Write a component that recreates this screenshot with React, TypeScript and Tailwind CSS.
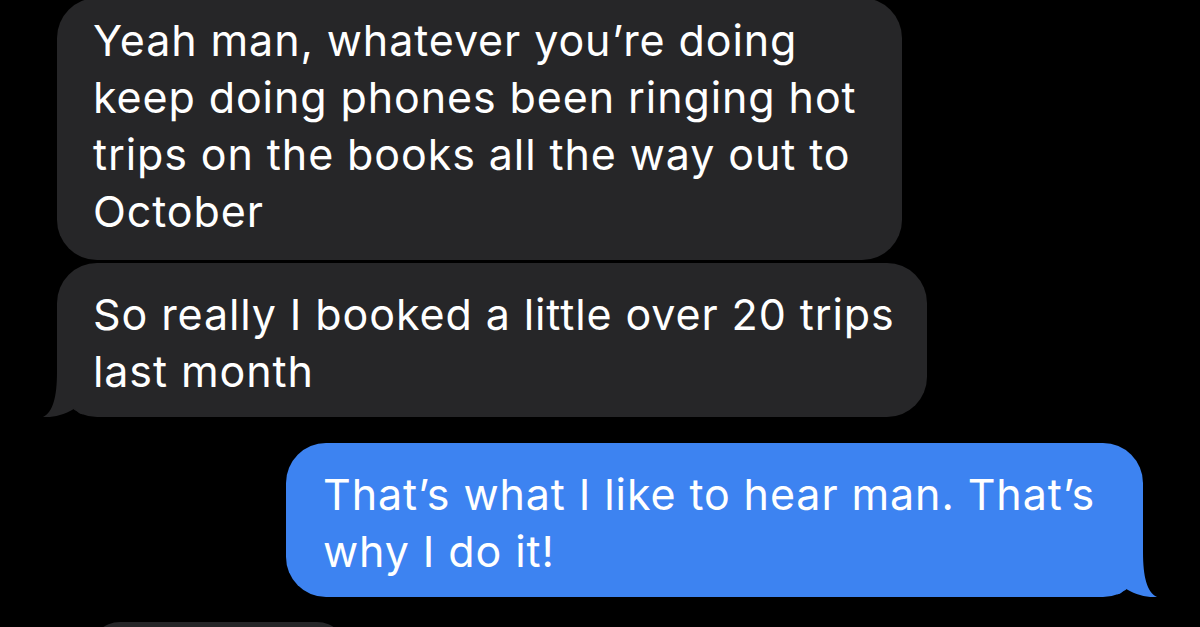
const GRAY = "bg-[#262628]";

const GrayTail = () => (
  <svg className="absolute left-[-14px] bottom-0" width="40" height="45" viewBox="0 0 40 45">
    <path d="M40 0 L14 0 C14 25 10 40 0 45 C10 46 24 42 32 36 C34 40 38 43 40 42 Z" fill="#262628" />
  </svg>
);

const BlueTail = () => (
  <svg className="absolute right-[-14px] bottom-0" width="40" height="45" viewBox="0 0 40 45">
    <path d="M0 0 L26 0 C26 25 30 40 40 45 C30 46 16 42 8 36 C6 40 2 43 0 42 Z" fill="#3d83f1" />
  </svg>
);

export default function App() {
  return (
    <div className="w-[1200px] h-[627px] bg-black overflow-hidden font-['Inter','Noto_Sans',sans-serif] text-white text-[43px] leading-[57px] tracking-[0.9px]">
      <div className="flex flex-col">
        <div className={`ml-[57px] mt-[-2px] w-[845px] ${GRAY} rounded-[40px] pl-[36px] pt-[14px] pb-[20px]`}>
          Yeah man, whatever you’re doing
          <br />
          keep doing phones been ringing hot
          <br />
          trips on the books all the way out to
          <br />
          October
        </div>

        <div className={`relative ml-[57px] mt-[3px] w-[870px] ${GRAY} rounded-[40px] pl-[36px] pt-[23px] pb-[17px]`}>
          So really I booked a little over 20 trips
          <br />
          last month
          <GrayTail />
        </div>

        <div className="relative ml-[286px] mt-[26px] w-[857px] bg-[#3d83f1] rounded-[40px] pl-[37px] pt-[23px] pb-[17px]">
          That’s what I like to hear man. That’s
          <br />
          why I do it!
          <BlueTail />
        </div>

        <div className={`ml-[90px] mt-[25px] w-[257px] h-[40px] ${GRAY} rounded-t-[30px]`} />
      </div>
    </div>
  );
}
